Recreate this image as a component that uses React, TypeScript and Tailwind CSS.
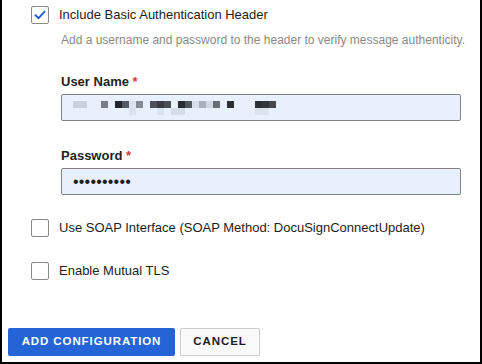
import React from 'react';

const censorRow1: [number, string][] = [
    [0, '#cbd1de'], [1, '#cbd1de'], [4, '#777d87'], [6, '#23272d'], [7, '#555a62'], [8, '#dde3ee'], [9, '#858b94'],
    [11, '#4e535b'], [12, '#383c42'], [13, '#4a4f56'], [15, '#282c31'], [16, '#52575e'], [17, '#d8dfec'], [18, '#a9b0bd'],
    [19, '#d0d7e4'], [20, '#686d75'], [22, '#2c3035'], [26, '#2e3237'], [27, '#32363b'], [28, '#45494f'],
];
const censorRow2: [number, string][] = [
    [8, '#dde3ee'], [12, '#dde3ee'], [14, '#d5dcea'], [15, '#d5dcea'], [26, '#dbe2ee'], [27, '#dbe2ee'],
];

function Checkbox({ checked }: { checked?: boolean }) {
    return (
        <div className="w-[18px] h-[18px] shrink-0 rounded-[2px] border border-[#8a8a8a] bg-white flex items-center justify-center">
            {checked && (
                <svg width="14" height="14" viewBox="0 0 14 14" fill="none">
                    <path d="M2.5 7.2 L5.6 10.2 L11.6 3.6" stroke="#1f5fd6" strokeWidth="1.9" strokeLinecap="round" strokeLinejoin="round" />
                </svg>
            )}
        </div>
    );
}

function Label({ text }: { text: string }) {
    return (
        <div className="h-[18px] leading-[18px] text-[13px] font-bold text-[#1e1e1e]">
            {text} <span className="text-[#d2383b]">*</span>
        </div>
    );
}

export default function App() {
    return (
        <div className="w-[482px] h-[364px] bg-white border-x-2 border-b-2 border-black font-['Liberation_Sans',Arial,sans-serif] text-[#1e1e1e] flex flex-col">
            {/* Basic auth */}
            <div className="mt-[6px] ml-[29px] flex items-center gap-[10px] h-[18px]">
                <Checkbox checked />
                <span className="text-[13px]">Include Basic Authentication Header</span>
            </div>
            <div className="ml-[59px] mt-[8px] h-[16px] leading-[16px] text-[12px] text-[#8a8a8a] whitespace-nowrap">
                Add a username and password to the header to verify message authenticity.
            </div>

            <div className="ml-[59px] mt-[25px]">
                <Label text="User Name" />
                <div className="mt-[3px] w-[400px] h-[27px] rounded-[2px] border border-[#828282] bg-[#e8f0fe] relative">
                    <div className="absolute left-[11px] top-[6px] w-[210px] h-[14px]">
                        {censorRow1.map(([c, col]) => (
                            <div key={'a' + c} className="absolute top-0 w-[7px] h-[7px]" style={{ left: c * 7, background: col }} />
                        ))}
                        {censorRow2.map(([c, col]) => (
                            <div key={'b' + c} className="absolute top-[7px] w-[7px] h-[7px]" style={{ left: c * 7, background: col }} />
                        ))}
                    </div>
                </div>

                <div className="mt-[26px]">
                    <Label text="Password" />
                </div>
                <div className="mt-[3px] w-[400px] h-[27px] rounded-[2px] border border-[#828282] bg-[#e8f0fe] flex items-center pl-[11px]">
                    <span className="text-[16px] leading-none tracking-[0.2px] text-[#1e1e1e]">••••••••••</span>
                </div>
            </div>

            <div className="mt-[24px] ml-[29px] flex items-center gap-[10px] h-[18px]">
                <Checkbox />
                <span className="text-[13px]">Use SOAP Interface (SOAP Method: DocuSignConnectUpdate)</span>
            </div>
            <div className="mt-[25px] ml-[29px] flex items-center gap-[10px] h-[18px]">
                <Checkbox />
                <span className="text-[13px]">Enable Mutual TLS</span>
            </div>

            {/* Actions */}
            <div className="mt-[48px] ml-[6px] flex gap-[5px]">
                <button className="w-[167px] h-[28px] rounded-[2px] bg-[#2564d6] text-white text-[11.5px] font-bold tracking-[0.9px]">
                    ADD CONFIGURATION
                </button>
                <button className="w-[80px] h-[28px] rounded-[2px] bg-[#f9f9f9] border border-[#cccccc] text-[#1e1e1e] text-[11.5px] font-bold tracking-[0.9px]">
                    CANCEL
                </button>
            </div>
        </div>
    );
}
